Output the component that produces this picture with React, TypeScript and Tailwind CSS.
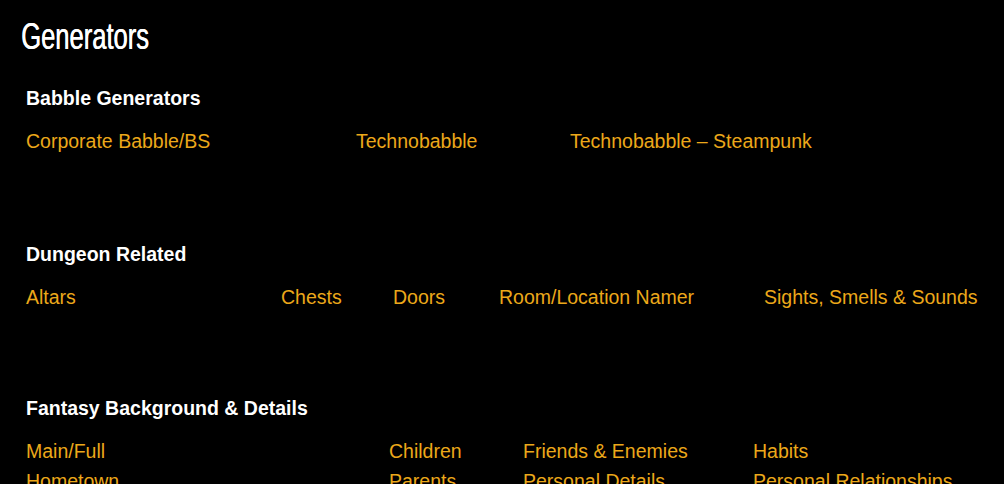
import React from 'react';

type Section = {
  title: string;
  cols: string;
  rows: string[][];
};

const sections: Section[] = [
  {
    title: 'Babble Generators',
    cols: 'grid-cols-[330px_214px_1fr]',
    rows: [['Corporate Babble/BS', 'Technobabble', 'Technobabble – Steampunk']],
  },
  {
    title: 'Dungeon Related',
    cols: 'grid-cols-[255px_112px_106px_265px_1fr]',
    rows: [['Altars', 'Chests', 'Doors', 'Room/Location Namer', 'Sights, Smells & Sounds']],
  },
  {
    title: 'Fantasy Background & Details',
    cols: 'grid-cols-[363px_134px_230px_1fr]',
    rows: [
      ['Main/Full', 'Children', 'Friends & Enemies', 'Habits'],
      ['Hometown', 'Parents', 'Personal Details', 'Personal Relationships'],
    ],
  },
];

const App: React.FC = () => {
  return (
    <div className="w-[1004px] h-[484px] overflow-hidden bg-black text-white font-['Liberation_Sans',Arial,sans-serif]">
      {/* page title */}
      <h1 className="pl-[21px] pt-[17px] h-[60px] text-[36px] leading-[40px] font-['Liberation_Sans',sans-serif]">
        <span className="inline-block [text-shadow:0.6px_0_0_#fff] scale-x-[0.71] origin-left">Generators</span>
      </h1>

      <div className="pl-[26px] pr-[26px] flex flex-col gap-[58px]">
        {sections.map((s, idx) => (
          <div key={s.title} className={idx === 1 ? 'mt-[2px]' : ''}>
            <h2 className="text-[19.5px] leading-[26px] font-bold pt-[25px]">{s.title}</h2>
            <div className="mt-[15px] flex flex-col">
              {s.rows.map((row, i) => (
                <div key={i} className={`grid ${s.cols} h-[30px] items-center`}>
                  {row.map((item) => (
                    <a key={item} href="#" className="text-[19.5px] leading-[30px] text-[#eca81a] whitespace-nowrap">
                      {item}
                    </a>
                  ))}
                </div>
              ))}
            </div>
          </div>
        ))}
      </div>
    </div>
  );
};

export default App;
